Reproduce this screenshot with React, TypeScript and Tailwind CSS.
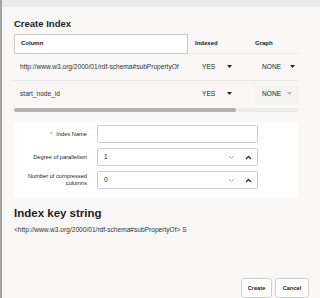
import React from 'react';

function Caret({ light }: { light?: boolean }) {
  return (
    <svg width="5" height="3" viewBox="0 0 5 3" className={light ? 'text-[#b5b5b5]' : 'text-[#222]'}>
      <path d="M0 0 L5 0 L2.5 3 Z" fill="currentColor" />
    </svg>
  );
}

function Spin() {
  return (
    <div className="flex items-center gap-[10px] pr-[5px]">
      <svg width="7" height="5" viewBox="0 0 7 5">
        <path d="M1 1 L3.5 3.5 L6 1" stroke="#b0b0b0" strokeWidth="1" fill="none" />
      </svg>
      <svg width="7" height="5" viewBox="0 0 7 5">
        <path d="M1 4 L3.5 1.5 L6 4" stroke="#333" strokeWidth="1.4" fill="none" />
      </svg>
    </div>
  );
}

export default function App() {
  return (
    <div
      className="w-[320px] h-[298px] overflow-hidden bg-[#f9f8f6] border-l-2 border-[#a3a3a3] flex flex-col text-[#222]"
      style={{ fontFamily: '"Liberation Sans", Arial, sans-serif' }}
    >
      <div className="h-[7px] bg-[#ebebeb] shrink-0" />
      <div className="pl-[12px] pr-[22px] flex flex-col">
        <div className="mt-[10px] text-[9.5px] font-bold leading-[14px]">Create Index</div>

        <div className="mt-[3px] flex text-[6px] font-bold h-[20px] items-center border-b border-[#ececec]">
          <div className="w-[174px] shrink-0 h-[20px] border border-[#c9c9c9] bg-white flex items-center pl-[6px]">Column</div>
          <div className="w-[61px] shrink-0 pl-[7px]">Indexed</div>
          <div className="pl-[6px]">Graph</div>
        </div>

        <div className="flex items-center h-[27px] text-[6.6px] border-b border-[#e6e6e6]">
          <div className="w-[174px] shrink-0 pl-[6px] text-[#333]">http://www.w3.org/2000/01/rdf-schema#subPropertyOf</div>
          <div className="w-[61px] shrink-0 flex items-center pl-[14px] gap-[12px]">
            <span>YES</span>
            <Caret />
          </div>
          <div className="flex items-center pl-[13px] gap-[9px]">
            <span>NONE</span>
            <Caret />
          </div>
        </div>

        <div className="flex items-center h-[25px] text-[6.6px]">
          <div className="w-[174px] shrink-0 pl-[6px] text-[#333]">start_node_id</div>
          <div className="w-[61px] shrink-0 flex items-center pl-[14px] gap-[12px]">
            <span>YES</span>
            <Caret />
          </div>
          <div className="ml-[6px] flex items-center justify-between h-[22px] w-[43px] pl-[7px] pr-[6px] bg-[#f4f4f2] rounded-[2px]">
            <span>NONE</span>
            <Caret light />
          </div>
        </div>

        <div className="mt-[2px] h-[4px] bg-[#ececec] rounded-full">
          <div className="h-[4px] w-[222px] bg-[#b3b3b3] rounded-full" />
        </div>

        <div className="mt-[10px] bg-white rounded-[3px] h-[76px] flex flex-col gap-[5px] pt-[3px] text-[5.7px]">
          <div className="flex items-center">
            <div className="w-[83px] text-right pr-[10px]">
              <span className="text-[#3b8fd6] mr-[4px]">*</span>Index Name
            </div>
            <div className="w-[161px] h-[18px] border border-[#cfcfcf] rounded-[2px]" />
          </div>
          <div className="flex items-center">
            <div className="w-[83px] text-right pr-[10px]">Degree of parallelism</div>
            <div className="w-[161px] h-[18px] border border-[#cfcfcf] rounded-[2px] flex items-center justify-between pl-[6px] text-[6.5px]">
              <span>1</span>
              <Spin />
            </div>
          </div>
          <div className="flex items-center">
            <div className="w-[83px] text-right pr-[10px] leading-[7px]">Number of compressed<br />columns</div>
            <div className="w-[161px] h-[18px] border border-[#cfcfcf] rounded-[2px] flex items-center justify-between pl-[6px] text-[6.5px]">
              <span>0</span>
              <Spin />
            </div>
          </div>
        </div>

        <div className="mt-[7px] text-[11.5px] font-bold leading-[16px]">Index key string</div>
        <div className="mt-[5px] text-[6.6px] leading-[7px] text-[#333]">&lt;http://www.w3.org/2000/01/rdf-schema#subPropertyOf&gt; S</div>

        <div className="mt-[45px] flex justify-end gap-[3px] -mr-[11px]">
          <div className="w-[31px] h-[20px] border border-[#cfcfcf] rounded-[3px] bg-white flex items-center justify-center text-[5.7px] font-bold">Create</div>
          <div className="w-[34px] h-[20px] border border-[#cfcfcf] rounded-[3px] bg-white flex items-center justify-center text-[5.7px] font-bold">Cancel</div>
        </div>
      </div>
    </div>
  );
}
